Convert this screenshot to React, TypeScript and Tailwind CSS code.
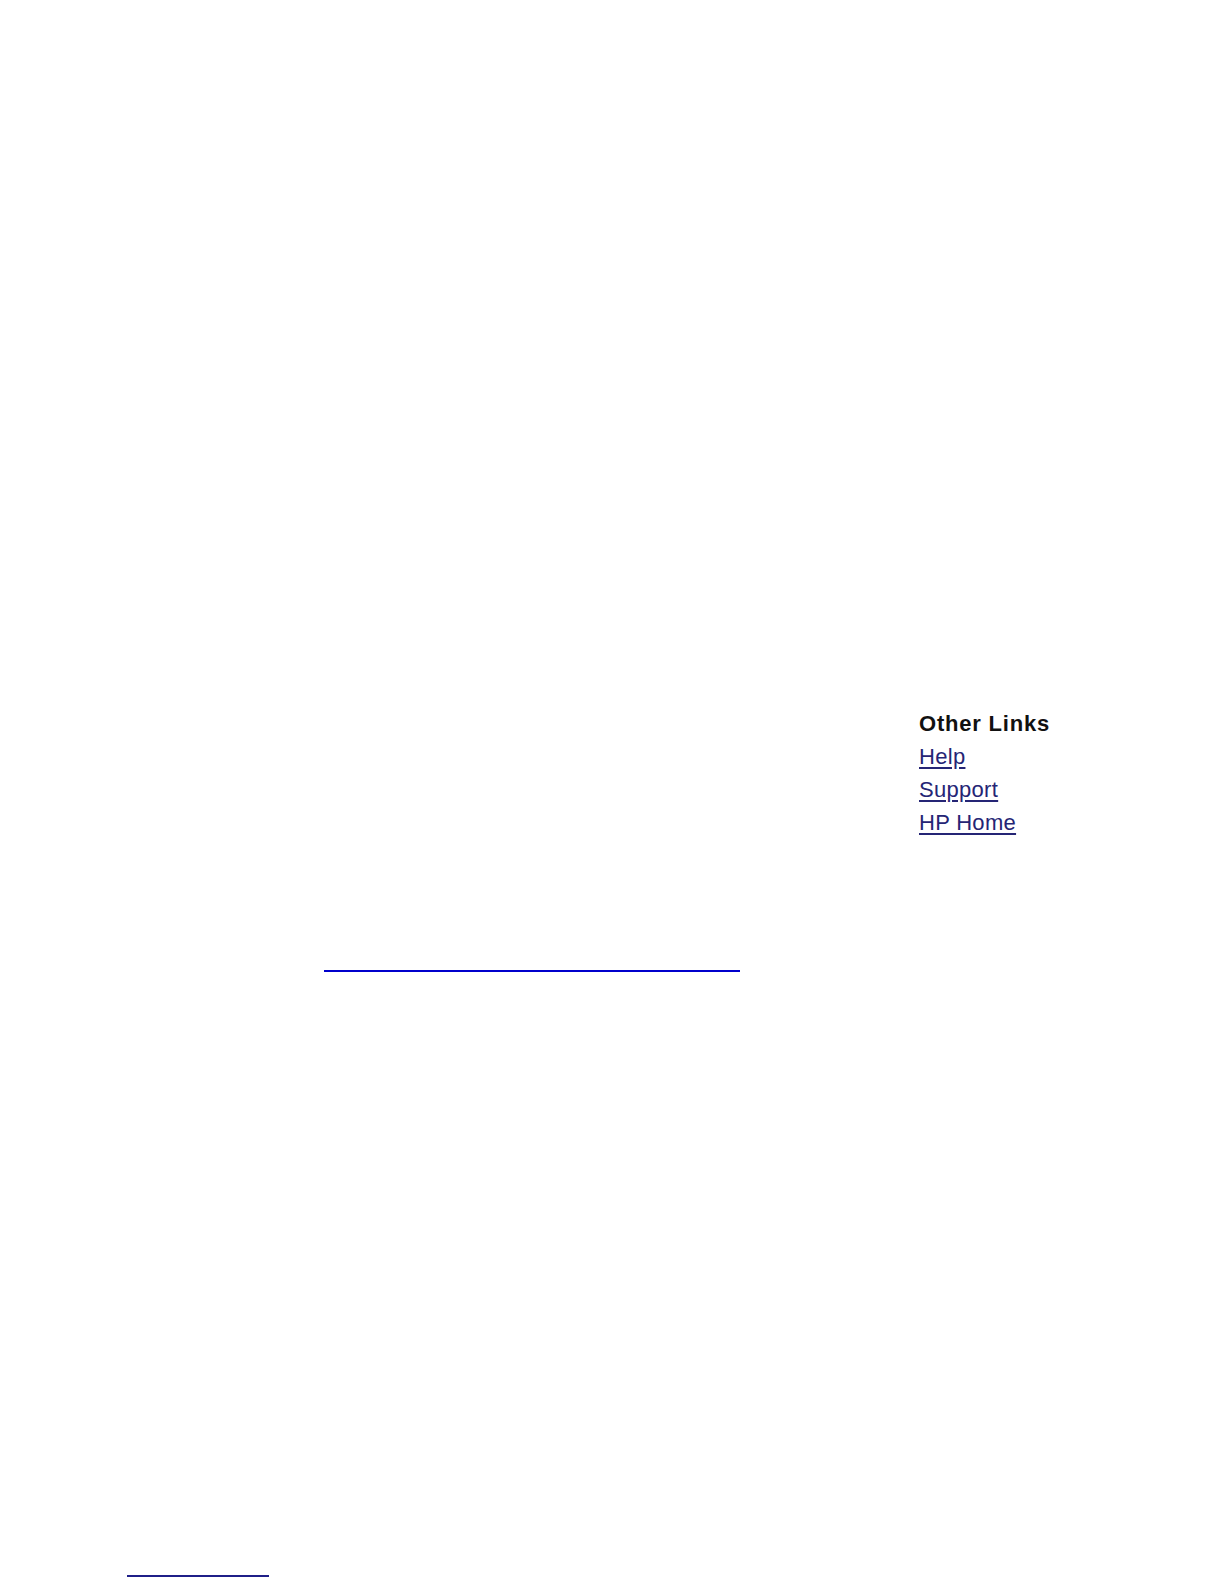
import React from 'react';

const OTHER_LINKS = ['Help', 'Support', 'HP Home'];

const App: React.FC = () => {
    return (
        <div className="w-[1224px] h-[1584px] bg-white overflow-hidden" style={{ fontFamily: '"Liberation Sans", Arial, sans-serif' }}>
            {/* Other links box, right side */}
            <div className="pt-[707px] pl-[919px]">
                <div className="text-[22px] leading-[33px] font-bold text-[#111111] tracking-[0.8px]">Other Links</div>
                <ul className="flex flex-col">
                    {OTHER_LINKS.map((link) => (
                        <li key={link} className="text-[22px] leading-[33px]">
                            <a href="#" className="text-[#252575] underline underline-offset-[3px] tracking-[0.3px]">
                                {link}
                            </a>
                        </li>
                    ))}
                </ul>
            </div>

            {/* blue rule */}
            <div className="mt-[131px] ml-[324px] w-[416px] h-[2px] bg-[#0000cc]" />

            {/* footnote rule */}
            <div className="mt-[603px] ml-[127px] w-[142px] h-[2px] bg-[#1f1f88]" />
        </div>
    );
};

export default App;
